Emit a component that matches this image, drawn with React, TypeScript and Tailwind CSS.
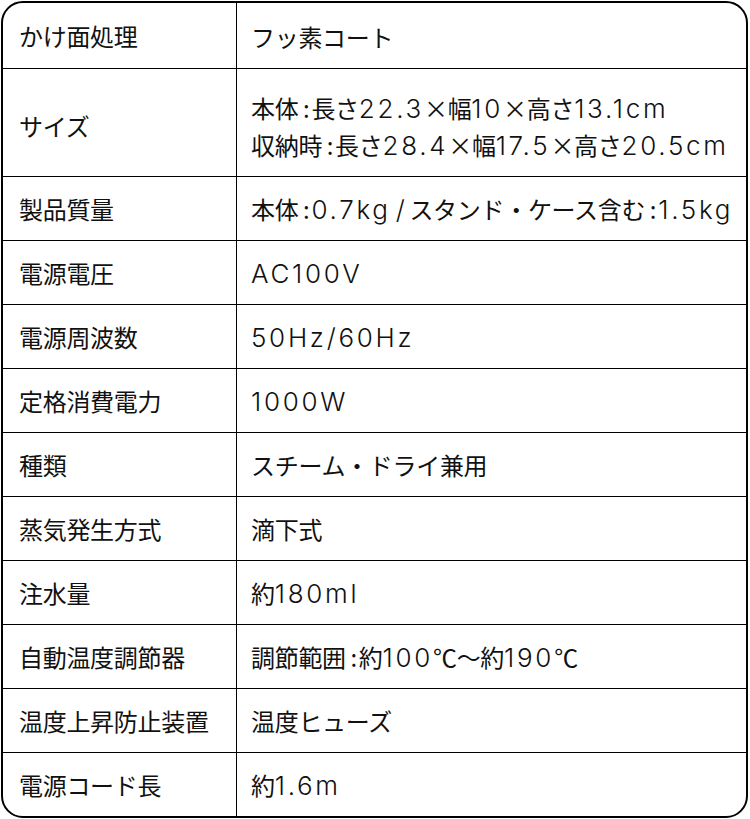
import React from "react";

const rows: { label: string; value: string[]; h: string; pad?: string }[] = [
  { label: "かけ面処理", value: ["フッ素コート"], h: "h-[66px]", pad: "pt-[1px]" },
  { label: "サイズ", value: ["本体：長さ22.3×幅10×高さ13.1cm", "収納時：長さ28.4×幅17.5×高さ20.5cm"], h: "h-[108px]", pad: "pt-[6px]" },
  { label: "製品質量", value: ["本体：0.7kg / スタンド・ケース含む：1.5kg"], h: "h-[64px]" },
  { label: "電源電圧", value: ["AC100V"], h: "h-[64px]" },
  { label: "電源周波数", value: ["50Hz/60Hz"], h: "h-[64px]" },
  { label: "定格消費電力", value: ["1000W"], h: "h-[64px]" },
  { label: "種類", value: ["スチーム・ドライ兼用"], h: "h-[64px]" },
  { label: "蒸気発生方式", value: ["滴下式"], h: "h-[64px]" },
  { label: "注水量", value: ["約180ml"], h: "h-[64px]" },
  { label: "自動温度調節器", value: ["調節範囲：約100℃〜約190℃"], h: "h-[64px]" },
  { label: "温度上昇防止装置", value: ["温度ヒューズ"], h: "h-[64px]" },
  { label: "電源コード長", value: ["約1.6m"], h: "flex-1" },
];

const latin = { fontFamily: 'Inter, "DejaVu Sans", sans-serif' };

function Rich({ text }: { text: string }) {
  const parts = text.split(/( \/ |：|[\x21-\x7E]+)/).filter((p) => p.length > 0);
  return (
    <>
      {parts.map((p, i) => {
        if (p === "：") {
          return (
            <span key={i} className="inline-block w-[13px] text-right pr-[2px]">
              :
            </span>
          );
        }
        if (p === " / ") {
          return (
            <span key={i} className="mx-[5px] text-[26px] font-light leading-none" style={latin}>
              /
            </span>
          );
        }
        if (/^[\x21-\x7E]+$/.test(p)) {
          return (
            <span key={i} className="text-[26px] leading-none tracking-[2.7px] font-light" style={latin}>
              {p}
            </span>
          );
        }
        return <span key={i}>{p}</span>;
      })}
    </>
  );
}

export default function App() {
  return (
    <div className="w-[750px] h-[819px] bg-white pl-[1px] pt-[1px]">
      <div
        className="w-[747px] h-[817px] border-2 border-black rounded-[22px] overflow-hidden flex flex-col text-[#111] font-normal"
        style={{ fontFamily: '"Noto Sans CJK JP", "Noto Sans", sans-serif' }}
      >
        {rows.map((r, i) => (
          <div
            key={i}
            className={`flex shrink-0 ${r.h} ${i < rows.length - 1 ? "border-b border-black" : ""}`}
          >
            <div
              className={`w-[234px] shrink-0 border-r border-black flex items-center pl-[16px] text-[24px] leading-none tracking-[-0.3px] ${r.pad ?? ""}`}
            >
              {r.label}
            </div>
            <div
              className={`flex-1 flex flex-col justify-center pl-[14px] text-[24px] leading-[37px] tracking-[-0.3px] whitespace-nowrap ${r.pad ?? ""}`}
            >
              {r.value.map((v, j) => (
                <div key={j} className="h-[37px]">
                  <Rich text={v} />
                </div>
              ))}
            </div>
          </div>
        ))}
      </div>
    </div>
  );
}
